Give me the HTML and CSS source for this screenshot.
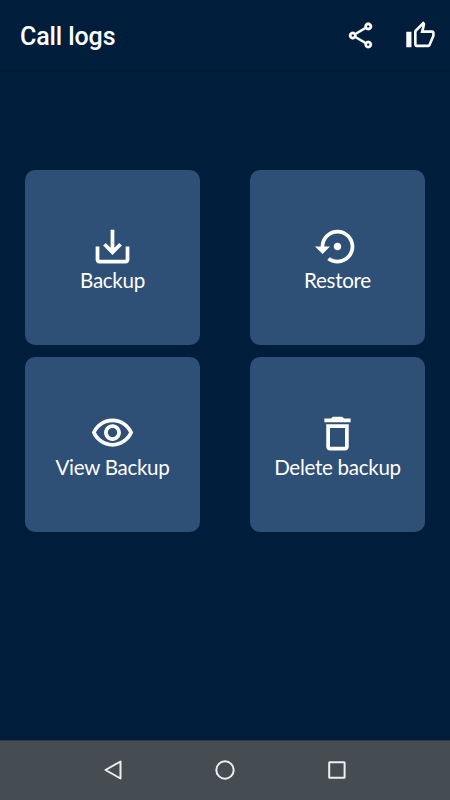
FILE: index.html
```
<!DOCTYPE html>
<html lang="en">
<head>
    <meta charset="UTF-8">
    <meta name="viewport" content="width=device-width, initial-scale=1.0">
    <title>Call logs</title>
    <link rel="stylesheet" href="styles.css">
</head>
<body>

<header class="app-bar">
    <h1>Call logs</h1>
    <button class="icon-btn" aria-label="Share">
        <svg viewBox="0 0 24 24" width="31" height="31"><path stroke="white" stroke-width="0.2" d="M18 16.08c-.76 0-1.44.3-1.96.77L8.91 12.7c.05-.23.09-.46.09-.7s-.04-.47-.09-.7l7.05-4.11c.54.5 1.25.81 2.04.81 1.66 0 3-1.34 3-3s-1.34-3-3-3-3 1.34-3 3c0 .24.04.47.09.7L8.04 9.81C7.5 9.31 6.79 9 6 9c-1.66 0-3 1.34-3 3s1.34 3 3 3c.79 0 1.5-.31 2.04-.81l7.12 4.16c-.05.21-.08.43-.08.65 0 1.61 1.31 2.92 2.92 2.92s2.92-1.31 2.92-2.92-1.31-2.92-2.92-2.92zM18 4c.55 0 1 .45 1 1s-.45 1-1 1-1-.45-1-1 .45-1 1-1zM6 13c-.55 0-1-.45-1-1s.45-1 1-1 1 .45 1 1-.45 1-1 1zm12 7.02c-.55 0-1-.45-1-1s.45-1 1-1 1 .45 1 1-.45 1-1 1z"/></svg>
    </button>
    <button class="icon-btn" aria-label="Like">
        <svg viewBox="0 0 24 24" width="31" height="31"><path d="M9 21h9c.83 0 1.54-.5 1.84-1.22l3.02-7.05c.09-.23.14-.47.14-.73v-2c0-1.1-.9-2-2-2h-6.31l.95-4.57.03-.32c0-.41-.17-.79-.44-1.06L14.17 1 7.58 7.59C7.22 7.95 7 8.45 7 9v10c0 1.1.9 2 2 2zM9 9l4.34-4.34L12 10h9v2l-3 7H9V9zM1 9h4v12H1z"/></svg>
    </button>
</header>

<main class="card-grid">
    <button class="card">
        <svg viewBox="0 0 24 24" width="45" height="45"><path d="M19 12v7H5v-7H3v7c0 1.1.9 2 2 2h14c1.1 0 2-.9 2-2v-7h-2zm-6 .67l2.59-2.58L17 11.5l-5 5-5-5 1.41-1.41L11 12.67V3h2v9.67z"/></svg>
        <span>Backup</span>
    </button>
    <button class="card">
        <svg viewBox="0 0 24 24" width="45" height="45"><path d="M14 12c0-1.1-.9-2-2-2s-2 .9-2 2 .9 2 2 2 2-.9 2-2zm-2-9c-4.97 0-9 4.03-9 9H0l4 4 4-4H5c0-3.87 3.13-7 7-7s7 3.13 7 7-3.13 7-7 7c-1.51 0-2.91-.49-4.06-1.3l-1.42 1.44C8.04 20.3 9.94 21 12 21c4.97 0 9-4.03 9-9s-4.03-9-9-9z"/></svg>
        <span>Restore</span>
    </button>
    <button class="card">
        <svg viewBox="0 0 24 24" width="45" height="45"><path d="M12 6c3.79 0 7.17 2.13 8.82 5.5C19.17 14.87 15.79 17 12 17s-7.17-2.13-8.82-5.5C4.83 8.13 8.21 6 12 6m0-2C7 4 2.73 7.11 1 11.5 2.73 15.89 7 19 12 19s9.27-3.11 11-7.5C21.27 7.11 17 4 12 4zm0 5c1.38 0 2.5 1.12 2.5 2.5S13.38 14 12 14s-2.5-1.12-2.5-2.5S10.62 9 12 9m0-2c-2.48 0-4.5 2.02-4.5 4.5S9.52 16 12 16s4.5-2.02 4.5-4.5S14.48 7 12 7z"/></svg>
        <span>View Backup</span>
    </button>
    <button class="card">
        <svg viewBox="0 0 24 24" width="45" height="45"><path d="M6 19c0 1.1.9 2 2 2h8c1.1 0 2-.9 2-2V7H6v12zM8 9h8v10H8V9zm7.5-5l-1-1h-5l-1 1H5v2h14V4z"/></svg>
        <span>Delete backup</span>
    </button>
</main>

<nav class="nav-bar">
    <svg viewBox="0 0 24 24" width="24" height="24"><path d="M4.5 12L19.5 3.5V20.5Z"/></svg>
    <svg viewBox="0 0 24 24" width="24" height="24"><circle cx="12" cy="12" r="8.7"/></svg>
    <svg viewBox="0 0 24 24" width="24" height="24"><rect x="4.2" y="4.2" width="15.4" height="15.6" rx="0.5"/></svg>
</nav>

</body>
</html>
```
FILE: styles.css
```
* {
    box-sizing: border-box;
}
body {
    margin: 0;
    height: 100vh;
    display: flex;
    flex-direction: column;
    background: #001e3c;
    color: white;
    font-family: Roboto, sans-serif;
}
button {
    border: none;
    padding: 0;
    color: white;
    cursor: pointer;
}
svg {
    display: block;
    fill: white;
}
.app-bar {
    display: flex;
    align-items: center;
    height: 70px;
    padding: 0 14.5px 0 20px;
    box-shadow: 0 1px 3px rgba(0, 0, 0, 0.3);
}
.app-bar h1 {
    flex: 1;
    margin: 0;
    padding-top: 2px;
    font-size: 25px;
    font-weight: 500;
    letter-spacing: -0.1px;
}
.icon-btn {
    background: none;
    margin-left: 29px;
}
.card-grid {
    flex: 1;
    display: grid;
    grid-template-columns: 175px 175px;
    grid-auto-rows: 175px;
    justify-content: space-between;
    align-content: start;
    row-gap: 12.4px;
    padding: 100px 25px 0;
}
.card {
    display: flex;
    flex-direction: column;
    align-items: center;
    justify-content: center;
    padding-bottom: 1px;
    background: #2e4f76;
    border-radius: 10px;
    font-family: Lato, sans-serif;
    font-size: 20.6px;
    line-height: 22px;
    letter-spacing: -0.3px;
}
.nav-bar {
    display: flex;
    justify-content: center;
    align-items: center;
    gap: 88.3px;
    height: 60px;
    padding-bottom: 1px;
    border-top: 1px solid #34393d;
    background: #454d52;
}
.nav-bar svg {
    fill: none;
    stroke: #eee;
    stroke-width: 2;
    stroke-linejoin: round;
}
```
